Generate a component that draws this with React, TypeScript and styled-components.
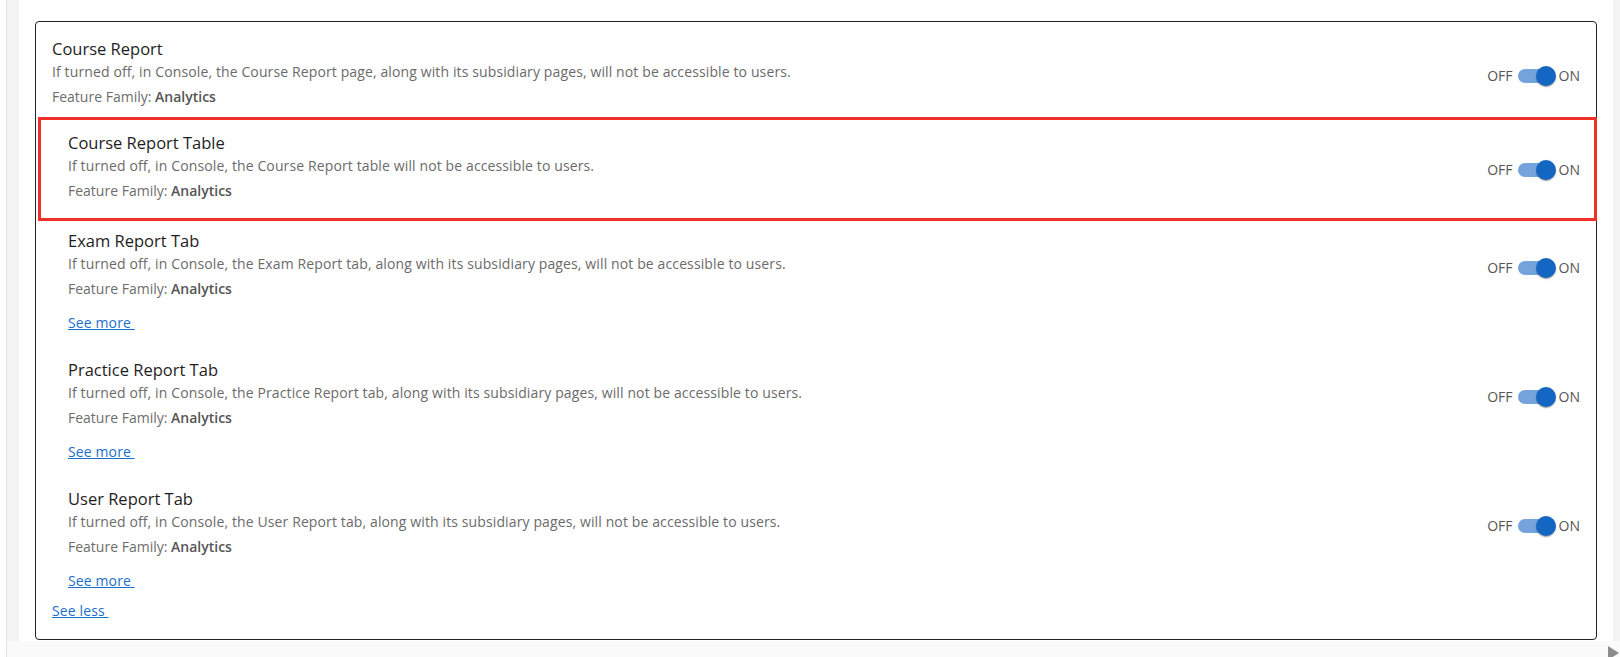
import React from "react";
import styled, { createGlobalStyle } from "styled-components";

const GlobalStyle = createGlobalStyle`
  html, body {
    margin: 0;
    padding: 0;
    background: #fafafa;
    font-family: "Open Sans", "Noto Sans", Arial, sans-serif;
  }
  * { box-sizing: border-box; }
`;

const Page = styled.div`
  display: flex;
  width: 1620px;
  height: 657px;
  overflow: hidden;
  background: #fafafa;
`;

const LeftRail = styled.div`
  width: 7px;
  flex: 0 0 7px;
  background: #ffffff;
  border-right: 1px solid #e3e3e3;
`;

const MainColumn = styled.div`
  flex: 1;
  display: flex;
  flex-direction: column;
  overflow: hidden;
`;

const TopArea = styled.div`
  display: flex;
  height: 641px;
  flex: 0 0 641px;
`;

const Gutter = styled.div<{ $w: number }>`
  width: ${(p) => p.$w}px;
  flex: 0 0 ${(p) => p.$w}px;
  background: #f3f3f3;
`;

const Panel = styled.div`
  flex: 1;
  background: #ffffff;
  padding: 21px 16px 1px 16px;
`;

const BottomBar = styled.div`
  flex: 1;
  display: flex;
  justify-content: flex-end;
  align-items: flex-start;
  padding-top: 5px;
  padding-right: 1px;
`;

const ScrollArrow = styled.div`
  width: 0;
  height: 0;
  border-top: 7px solid transparent;
  border-bottom: 7px solid transparent;
  border-left: 11px solid #8c8c8c;
`;

const Card = styled.div`
  border: 1px solid #222222;
  border-radius: 4px;
  height: 619px;
  padding: 0 0 18px 0;
  display: flex;
  flex-direction: column;
`;

const Item = styled.div<{ $pt: number; $pb: number; $pl: number; $pr: number; $highlight?: boolean }>`
  position: relative;
  padding: ${(p) => p.$pt}px ${(p) => p.$pr}px ${(p) => p.$pb}px ${(p) => p.$pl}px;
  border: ${(p) => (p.$highlight ? "3px solid #ef2f28" : "none")};
  margin: ${(p) => (p.$highlight ? "0 -1px -3px 2px" : "0")};
`;

const ItemRow = styled.div`
  display: flex;
  align-items: flex-start;
  justify-content: space-between;
`;

const Info = styled.div`
  display: flex;
  flex-direction: column;
`;

const Title = styled.div`
  font-size: 16.5px;
  line-height: 24px;
  color: #1e1e1e;
`;

const Desc = styled.div`
  font-size: 14px;
  line-height: 21px;
  letter-spacing: 0.12px;
  color: #6b6b6b;
`;

const Family = styled.div`
  font-size: 14px;
  line-height: 21px;
  margin-top: 4px;
  color: #6d6d6d;
  b {
    font-weight: 600;
    color: #555555;
  }
`;

const Link = styled.a<{ $mt: number }>`
  display: inline-block;
  align-self: flex-start;
  margin-top: ${(p) => p.$mt}px;
  font-size: 14px;
  line-height: 21px;
  letter-spacing: 0.12px;
  color: #1a6fcb;
  text-decoration: underline;
  cursor: pointer;
  white-space: pre;
`;

const LessWrap = styled.div`
  padding-left: 16px;
  display: flex;
`;

const Toggle = styled.div`
  display: flex;
  align-items: center;
  margin-top: 29px;
  height: 20px;
  font-size: 14px;
  color: #555555;
`;

const ToggleLabel = styled.span<{ $ml: number; $mr: number }>`
  margin-left: ${(p) => p.$ml}px;
  margin-right: ${(p) => p.$mr}px;
  line-height: 20px;
`;

const Track = styled.span`
  position: relative;
  display: block;
  width: 34px;
  height: 14px;
  border-radius: 7px;
  background: #75a3dc;
`;

const Knob = styled.span`
  position: absolute;
  top: -3px;
  right: -4px;
  width: 20px;
  height: 20px;
  border-radius: 50%;
  background: #1466c3;
  box-shadow: 0 2px 1px -1px rgba(0, 0, 0, 0.2), 0 1px 1px 0 rgba(0, 0, 0, 0.14),
    0 1px 3px 0 rgba(0, 0, 0, 0.12);
`;

type Feature = {
  title: string;
  desc: string;
  seeMore?: boolean;
};

const OnOff = () => (
  <Toggle>
    <ToggleLabel $ml={0} $mr={5}>OFF</ToggleLabel>
    <Track>
      <Knob />
    </Track>
    <ToggleLabel $ml={7} $mr={0}>ON</ToggleLabel>
  </Toggle>
);

const FeatureBody = ({ f }: { f: Feature }) => (
  <>
    <ItemRow>
      <Info>
        <Title>{f.title}</Title>
        <Desc>{f.desc}</Desc>
        <Family>
          Feature Family: <b>Analytics</b>
        </Family>
      </Info>
      <OnOff />
    </ItemRow>
    {f.seeMore && <Link $mt={13}>{"See more "}</Link>}
  </>
);

const parent: Feature = {
  title: "Course Report",
  desc:
    "If turned off, in Console, the Course Report page, along with its subsidiary pages, will not be accessible to users.",
};

const children: (Feature & { highlight?: boolean })[] = [
  {
    title: "Course Report Table",
    desc: "If turned off, in Console, the Course Report table will not be accessible to users.",
    highlight: true,
  },
  {
    title: "Exam Report Tab",
    desc:
      "If turned off, in Console, the Exam Report tab, along with its subsidiary pages, will not be accessible to users.",
    seeMore: true,
  },
  {
    title: "Practice Report Tab",
    desc:
      "If turned off, in Console, the Practice Report tab, along with its subsidiary pages, will not be accessible to users.",
    seeMore: true,
  },
  {
    title: "User Report Tab",
    desc:
      "If turned off, in Console, the User Report tab, along with its subsidiary pages, will not be accessible to users.",
    seeMore: true,
  },
];

export default function App() {
  return (
    <>
      <GlobalStyle />
      <Page>
        <LeftRail />
        <MainColumn>
          <TopArea>
            <Gutter $w={12} />
            <Panel>
              <Card>
                <Item $pt={15} $pb={10} $pl={16} $pr={16}>
                  <FeatureBody f={parent} />
                </Item>
                {children.map((c) =>
                  c.highlight ? (
                    <Item key={c.title} $pt={11} $pb={17} $pl={27} $pr={14} $highlight>
                      <FeatureBody f={c} />
                    </Item>
                  ) : (
                    <Item key={c.title} $pt={11} $pb={14} $pl={32} $pr={16}>
                      <FeatureBody f={c} />
                    </Item>
                  )
                )}
                <LessWrap>
                  <Link $mt={-5}>{"See less "}</Link>
                </LessWrap>
              </Card>
            </Panel>
            <Gutter $w={7} />
          </TopArea>
          <BottomBar>
            <ScrollArrow />
          </BottomBar>
        </MainColumn>
      </Page>
    </>
  );
}
